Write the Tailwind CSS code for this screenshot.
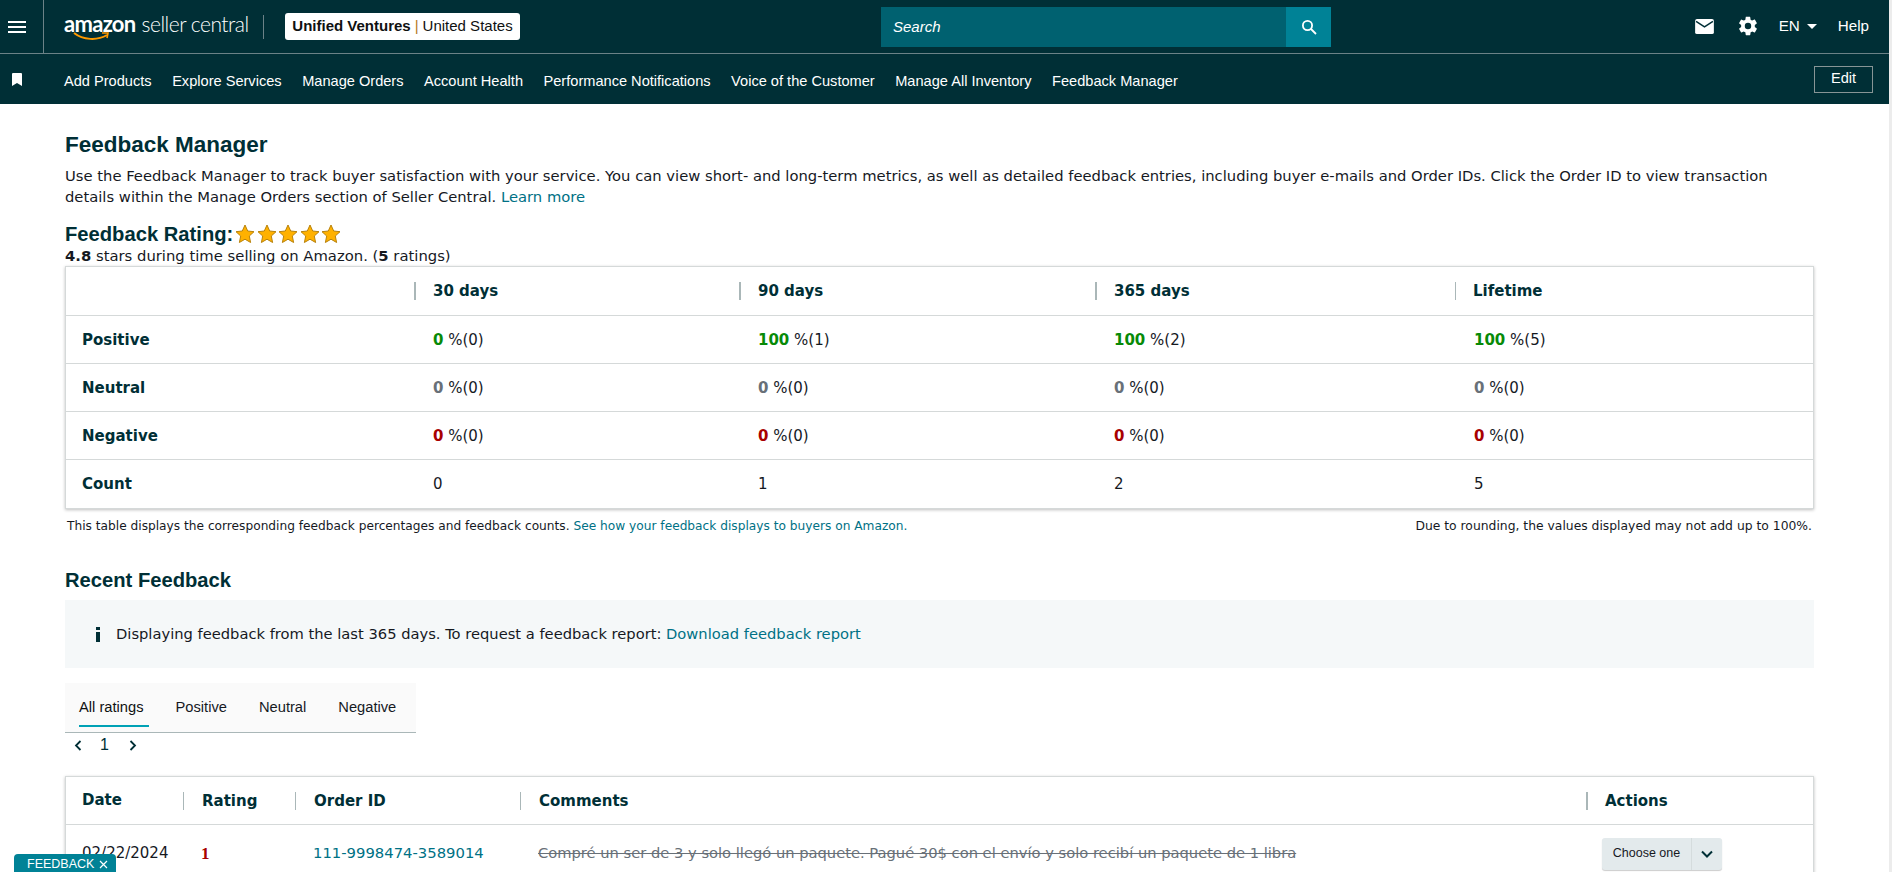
<!DOCTYPE html>
<html lang="en">
<head>
  <meta charset="UTF-8" />
  <title>Feedback Manager</title>
  <script src="https://cdn.jsdelivr.net/npm/@tailwindcss/browser@4"></script>
</head>
<body class="h-[872px] overflow-hidden bg-white font-['DejaVu_Sans',sans-serif] text-[#0f1111]">
  <!-- top nav -->
  <header class="bg-[#002f36] text-white font-['Liberation_Sans',sans-serif]">
    <div class="flex h-[54px] items-center border-b border-[#6b8287]">
      <button class="flex h-full w-[44px] items-center justify-start border-r border-[#6b8287] pl-[8px]">
        <svg width="18" height="12" viewBox="0 0 18 12" fill="white"><rect y="0" width="18" height="2"/><rect y="5" width="18" height="2"/><rect y="10" width="18" height="2"/></svg>
      </button>
      <div class="ml-[20px] flex w-[199px] items-center">
        <div class="relative -mt-[5px] whitespace-nowrap font-['Lato',sans-serif] leading-none">
          <span class="text-[22px] font-bold tracking-[-0.7px]">amazon</span><span class="ml-[6px] text-[21px] font-light tracking-[-0.5px]">seller central</span>
          <svg class="absolute left-[9px] top-[19px]" width="38" height="10" viewBox="0 0 38 10" fill="none"><path d="M1 1c9 7 23 8 33 2" stroke="#ff9900" stroke-width="2"/><path d="M29 1l6 0-1 5" stroke="#ff9900" stroke-width="1.6"/></svg>
        </div>
      </div>
      <div class="h-[24px] w-px bg-[#6b8287]"></div>
      <div class="ml-[21px] flex h-[27px] w-[235px] items-center justify-center whitespace-nowrap rounded-[3px] bg-white text-[15px] text-[#0f1111]"><b>Unified Ventures</b><span class="mx-[4px] text-[#b5791f]">|</span>United States</div>
      <div class="ml-[361px] flex h-[40px] w-[450px]">
        <div class="flex flex-1 items-center bg-[#006170] pl-[12px] pt-[1px] text-[15px] italic">Search</div>
        <div class="flex w-[45px] items-center justify-center bg-[#008296]">
          <svg width="16" height="16" viewBox="0 0 16 16" fill="none" stroke="white" stroke-width="1.8"><circle cx="6.500" cy="6.500" r="4.600"/><path d="M10 10l5 5"/></svg>
        </div>
      </div>
      <div class="ml-auto flex items-center pr-[23px] text-[15.2px]">
        <svg width="19" height="15" viewBox="0 0 20 16"><rect width="20" height="16" rx="2" fill="white"/><path d="M1 2.500l9 6 9-6" fill="none" stroke="#002f36" stroke-width="1.600"/></svg>
        <svg class="ml-[23px]" width="22" height="22" viewBox="0 0 24 24" fill="white"><path d="M19.400 13c.04-.33.06-.66.06-1s-.02-.67-.06-1l2.100-1.650c.19-.15.24-.42.12-.64l-2-3.460c-.12-.22-.39-.3-.61-.22l-2.490 1c-.52-.4-1.080-.73-1.690-.98l-.38-2.650A.49.49 0 0 0 14 2h-4c-.25 0-.46.18-.49.42l-.38 2.650c-.61.25-1.170.59-1.690.98l-2.490-1c-.23-.09-.49 0-.61.22l-2 3.460c-.13.22-.07.49.12.64L4.560 11c-.04.33-.07.67-.07 1s.03.67.07 1l-2.110 1.650c-.19.15-.24.42-.12.64l2 3.460c.12.22.39.3.61.22l2.490-1c.52.4 1.080.73 1.690.98l.38 2.650c.03.24.24.42.49.42h4c.25 0 .46-.18.49-.42l.38-2.650c.61-.25 1.170-.59 1.690-.98l2.490 1c.23.09.49 0 .61-.22l2-3.460c.12-.22.07-.49-.12-.64L19.400 13zM12 15.500a3.500 3.500 0 1 1 0-7 3.500 3.500 0 0 1 0 7z"/></svg>
        <span class="ml-[20px]">EN</span>
        <span class="ml-[7px] h-0 w-0 border-x-[5px] border-t-[5px] border-x-transparent border-t-white"></span>
        <span class="ml-[21px]">Help</span>
      </div>
    </div>
    <div class="flex h-[50px] items-center pr-[19px]">
      <div class="flex w-[64px] justify-start pl-[12px]">
        <svg width="10" height="13" viewBox="0 0 10 13" fill="white"><path d="M0 1a1 1 0 0 1 1-1h8a1 1 0 0 1 1 1v12L5 10l-5 3z"/></svg>
      </div>
      <nav class="flex gap-[20.5px] pt-[5px] text-[14.6px]">
        <a>Add Products</a><a>Explore Services</a><a>Manage Orders</a><a>Account Health</a><a>Performance Notifications</a><a>Voice of the Customer</a><a>Manage All Inventory</a><a>Feedback Manager</a>
      </nav>
      <button class="ml-auto h-[27px] w-[59px] border border-[#879596] text-[14.6px]">Edit</button>
    </div>
  </header>

  <main class="pl-[65px] pr-[78px] pt-[27px]">
    <h1 class="font-['Liberation_Sans',sans-serif] text-[22.5px] font-bold leading-[28px] text-[#002f36]">Feedback Manager</h1>
    <p class="mt-[7px] text-[14.76px] leading-[20.5px] text-[#16191f]">Use the Feedback Manager to track buyer satisfaction with your service. You can view short- and long-term metrics, as well as detailed feedback entries, including buyer e-mails and Order IDs. Click the Order ID to view transaction details within the Manage Orders section of Seller Central. <a class="text-[#007185]">Learn more</a></p>

    <div class="mt-[14px] flex h-[27px] items-center">
      <h2 class="font-['Liberation_Sans',sans-serif] text-[20.2px] font-bold text-[#002f36]">Feedback Rating:</h2>
      <div class="ml-[2px] -mt-[2px] flex gap-[1.500px]">
        <svg width="20" height="20" viewBox="0 0 20 20"><path d="M10 1l2.700 6 6.300.7-4.700 4.300 1.300 6.500L10 15.200l-5.600 3.300L5.700 12 1 7.700 7.300 7z" fill="#ffb100" stroke="#b8820b"/></svg>
        <svg width="20" height="20" viewBox="0 0 20 20"><path d="M10 1l2.700 6 6.300.7-4.700 4.300 1.300 6.500L10 15.200l-5.600 3.300L5.700 12 1 7.700 7.300 7z" fill="#ffb100" stroke="#b8820b"/></svg>
        <svg width="20" height="20" viewBox="0 0 20 20"><path d="M10 1l2.700 6 6.300.7-4.700 4.300 1.300 6.500L10 15.200l-5.600 3.300L5.700 12 1 7.700 7.300 7z" fill="#ffb100" stroke="#b8820b"/></svg>
        <svg width="20" height="20" viewBox="0 0 20 20"><path d="M10 1l2.700 6 6.300.7-4.700 4.300 1.300 6.500L10 15.200l-5.600 3.300L5.700 12 1 7.700 7.300 7z" fill="#ffb100" stroke="#b8820b"/></svg>
        <svg width="20" height="20" viewBox="0 0 20 20"><path d="M10 1l2.700 6 6.300.7-4.700 4.300 1.300 6.500L10 15.200l-5.600 3.300L5.700 12 1 7.700 7.300 7z" fill="#ffb100" stroke="#b8820b"/></svg>
      </div>
    </div>
    <p class="text-[14.8px] leading-[16px] text-[#16191f]"><b>4.8</b> stars during time selling on Amazon. (<b>5</b> ratings)</p>

    <!-- summary table -->
    <div class="mt-[2px] border border-[#d5d9d9] shadow-[0_1px_3px_rgba(0,0,0,0.25)] text-[15px] text-[#16191f]">
      <div class="grid h-[49px] grid-cols-[348px_325px_356px_360px_1fr] items-center border-b border-[#d5d9d9] font-bold text-[#002f36]">
        <div></div>
        <div class="border-l-2 border-[#aab7b8] pl-[17px] leading-[18px]">30 days</div>
        <div class="border-l-2 border-[#aab7b8] pl-[17px] leading-[18px]">90 days</div>
        <div class="border-l-2 border-[#aab7b8] pl-[17px] leading-[18px]">365 days</div>
        <div class="border-l border-[#aab7b8] pl-[17px] leading-[18px]">Lifetime</div>
      </div>
      <div class="grid h-[48px] grid-cols-[348px_325px_356px_360px_1fr] items-center border-b border-[#d5d9d9] pt-[1px]">
        <b class="pl-[16px] text-[#002f36]">Positive</b>
        <div class="pl-[19px]"><b class="text-[#078a07]">0</b> %(0)</div>
        <div class="pl-[19px]"><b class="text-[#078a07]">100</b> %(1)</div>
        <div class="pl-[19px]"><b class="text-[#078a07]">100</b> %(2)</div>
        <div class="pl-[19px]"><b class="text-[#078a07]">100</b> %(5)</div>
      </div>
      <div class="grid h-[48px] grid-cols-[348px_325px_356px_360px_1fr] items-center border-b border-[#d5d9d9] pt-[1px]">
        <b class="pl-[16px] text-[#002f36]">Neutral</b>
        <div class="pl-[19px]"><b class="text-[#687078]">0</b> %(0)</div>
        <div class="pl-[19px]"><b class="text-[#687078]">0</b> %(0)</div>
        <div class="pl-[19px]"><b class="text-[#687078]">0</b> %(0)</div>
        <div class="pl-[19px]"><b class="text-[#687078]">0</b> %(0)</div>
      </div>
      <div class="grid h-[48px] grid-cols-[348px_325px_356px_360px_1fr] items-center border-b border-[#d5d9d9] pt-[1px]">
        <b class="pl-[16px] text-[#002f36]">Negative</b>
        <div class="pl-[19px]"><b class="text-[#a80000]">0</b> %(0)</div>
        <div class="pl-[19px]"><b class="text-[#a80000]">0</b> %(0)</div>
        <div class="pl-[19px]"><b class="text-[#a80000]">0</b> %(0)</div>
        <div class="pl-[19px]"><b class="text-[#a80000]">0</b> %(0)</div>
      </div>
      <div class="grid h-[48px] grid-cols-[348px_325px_356px_360px_1fr] items-center pt-[1px]">
        <b class="pl-[16px] text-[#002f36]">Count</b>
        <div class="pl-[19px]">0</div>
        <div class="pl-[19px]">1</div>
        <div class="pl-[19px]">2</div>
        <div class="pl-[19px]">5</div>
      </div>
    </div>
    <div class="mt-[10px] flex justify-between px-[2px] text-[12.2px] leading-[14px] text-[#16191f]">
      <p>This table displays the corresponding feedback percentages and feedback counts. <a class="text-[#007185]">See how your feedback displays to buyers on Amazon.</a></p>
      <p class="text-[12.35px]">Due to rounding, the values displayed may not add up to 100%.</p>
    </div>

    <h2 class="mt-[34px] font-['Liberation_Sans',sans-serif] text-[20.2px] font-bold leading-[26px] text-[#002f36]">Recent Feedback</h2>
    <div class="mt-[7px] flex h-[68px] items-center bg-[#f5f8f9] pl-[30px] text-[14.7px] text-[#16191f]">
      <svg class="ml-[1px]" width="4" height="15" viewBox="0 0 4 15" fill="#002f36"><rect width="4" height="3"/><rect y="5" width="4" height="10"/></svg>
      <span class="ml-[16px]">Displaying feedback from the last 365 days. To request a feedback report: <a class="text-[#007185]">Download feedback report</a></span>
    </div>

    <!-- tabs -->
    <div class="mt-[15px] flex h-[50px] w-[351px] items-start gap-[32px] border-b border-[#aab7b8] bg-[#fafafa] px-[14px] pt-[13px] font-['Liberation_Sans',sans-serif] text-[14.7px]">
      <a class="relative text-[#0f1111]">All ratings<span class="absolute left-0 top-[29px] h-[2px] w-[70px] bg-[#00a1b5]"></span></a>
      <a class="text-[#16191f]">Positive</a>
      <a class="text-[#16191f]">Neutral</a>
      <a class="text-[#16191f]">Negative</a>
    </div>
    <div class="flex h-[24px] items-center pl-[9px] font-['Liberation_Sans',sans-serif] text-[16px] text-[#002f36]">
      <svg width="8" height="11" viewBox="0 0 8 11" fill="none" stroke="#002f36" stroke-width="1.800"><path d="M6.500 1L2 5.500l4.500 4.500"/></svg>
      <span class="ml-[18px]">1</span>
      <svg class="ml-[20px]" width="8" height="11" viewBox="0 0 8 11" fill="none" stroke="#002f36" stroke-width="1.800"><path d="M1.500 1L6 5.500 1.500 10"/></svg>
    </div>

    <!-- feedback table -->
    <div class="mt-[19px] border border-[#d5d9d9] shadow-[0_1px_3px_rgba(0,0,0,0.25)] text-[15px] text-[#16191f]">
      <div class="grid h-[48px] grid-cols-[117px_112px_225px_1066px_1fr] items-center border-b border-[#d5d9d9] font-bold text-[#002f36]">
        <div class="pl-[16px]">Date</div>
        <div class="border-l border-[#aab7b8] pl-[18px] leading-[18px]">Rating</div>
        <div class="border-l border-[#aab7b8] pl-[18px] leading-[18px]">Order ID</div>
        <div class="border-l border-[#aab7b8] pl-[18px] leading-[18px]">Comments</div>
        <div class="border-l-2 border-[#aab7b8] pl-[17px] leading-[18px]">Actions</div>
      </div>
      <div class="grid h-[56px] grid-cols-[117px_112px_225px_1066px_1fr] items-center pt-[1px]">
        <div class="pl-[16px]">02/22/2024</div>
        <div class="pl-[18px] font-['Liberation_Serif',serif] text-[17px] font-bold text-[#a80000]">1</div>
        <a class="pl-[18px] text-[14.8px] text-[#007185]">111-9998474-3589014</a>
        <div class="pl-[18px] text-[14.7px] text-[#687078] line-through">Compré un ser de 3 y solo llegó un paquete. Pagué 30$ con el envío y solo recibí un paquete de 1 libra</div>
        <div class="pl-[16px]">
          <div class="flex h-[32px] w-[120px] rounded-[3px] bg-[#e3eaec] font-['Liberation_Sans',sans-serif] text-[12.5px] shadow-[0_1px_1px_rgba(0,0,0,0.2)]">
            <span class="flex flex-1 items-center justify-center border-r border-[#d5dcdd]">Choose one</span>
            <span class="flex w-[30px] items-center justify-center"><svg width="12" height="8" viewBox="0 0 12 8" fill="none" stroke="#002f36" stroke-width="2"><path d="M1 1.500l5 5 5-5"/></svg></span>
          </div>
        </div>
      </div>
    </div>
  </main>

  <!-- floating feedback tab -->
  <div class="fixed bottom-0 left-[14px] flex h-[18px] w-[102px] items-center rounded-t-[4px] bg-[#008296] pl-[13px] pt-[2px] font-['Liberation_Sans',sans-serif] text-[12.5px] text-white">FEEDBACK<svg class="ml-[5px]" width="9" height="9" viewBox="0 0 9 9" stroke="white" stroke-width="1.200"><path d="M1 1l7 7M8 1l-7 7"/></svg></div>
  <div class="fixed right-0 top-0 h-full w-[3px] bg-[#ececec]"></div>
</body>
</html>
